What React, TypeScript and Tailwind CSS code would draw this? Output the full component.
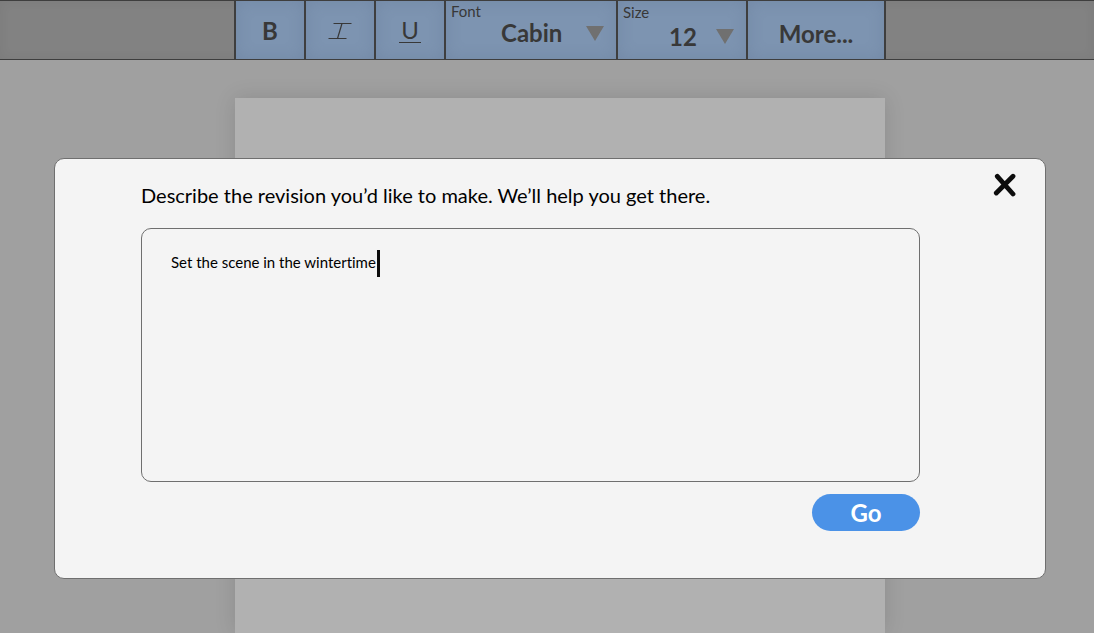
import { useState } from "react";

const cell =
  "relative h-full shrink-0 border-r-2 border-[#3e3e3e] bg-[#7d94b1] text-[#383838] shadow-[inset_0_0_16px_rgba(70,90,115,0.18)]";

function DownArrow() {
  return (
    <svg className="h-[15px] w-[18px] shrink-0" viewBox="0 0 18 15" aria-hidden="true">
      <path d="M0 0H18L9 15Z" fill="#707070" />
    </svg>
  );
}

function Toolbar() {
  return (
    <div className="flex h-[60px] justify-center border-t border-b border-[#3e3e3e] bg-[#828282] pl-[26px] shadow-[inset_0_0_12px_rgba(0,0,0,0.05)]">
      <div className="flex h-full border-l-2 border-[#3e3e3e]">
        <button type="button" aria-label="Bold" className={`${cell} w-[70px] pt-px text-2xl font-bold`}>
          B
        </button>
        <button type="button" aria-label="Italic" className={`${cell} flex w-[70px] items-center justify-center pt-[2px]`}>
          <svg className="h-[18px] w-6" viewBox="0 0 24 18" fill="none" stroke="#383838" aria-hidden="true">
            <path d="M5.500 1.500H23.500M.5 16.500H18.500" />
            <path d="M14 1.500L9.500 16.500" strokeWidth="1.200" />
          </svg>
        </button>
        <button type="button" aria-label="Underline" className={`${cell} flex w-[70px] items-center justify-center`}>
          <span className="w-[22px] border-b border-[#383838] text-2xl leading-6">U</span>
        </button>
        <div className={`${cell} w-[172px]`}>
          <label htmlFor="font" className="block pt-[2px] pl-[5px] text-[15px] leading-4">
            Font
          </label>
          <div className="flex items-center pr-3">
            <select id="font" defaultValue="Cabin" className="min-w-0 flex-1 appearance-none bg-transparent pl-[55px] text-2xl leading-7 font-bold">
              <option>Cabin</option>
            </select>
            <DownArrow />
          </div>
        </div>
        <div className={`${cell} w-[130px]`}>
          <label htmlFor="size" className="block pt-[3px] pl-[5px] text-[15px] leading-4">
            Size
          </label>
          <div className="flex items-center pt-px pr-3">
            <select id="size" defaultValue="12" className="min-w-0 flex-1 appearance-none bg-transparent pt-[2px] pl-[51px] text-2xl leading-7 font-bold">
              <option>12</option>
            </select>
            <DownArrow />
          </div>
        </div>
        <button type="button" className={`${cell} w-[138px] pt-[7px] text-2xl font-bold`}>
          More...
        </button>
      </div>
    </div>
  );
}

function RevisionDialog() {
  const [text, setText] = useState("Set the scene in the wintertime");
  return (
    <div className="fixed inset-0 pt-[158px] pr-12 pl-[54px]">
      <form
        role="dialog"
        aria-modal="true"
        aria-labelledby="prompt"
        onSubmit={(e) => e.preventDefault()}
        className="relative flex flex-col rounded-[10px] border border-[#6f6f6f] bg-[#f4f4f4] pt-[22px] pr-[125px] pb-[47px] pl-[86px] text-black"
      >
        <label id="prompt" htmlFor="revision" className="text-xl leading-7">
          Describe the revision you’d like to make. We’ll help you get there.
        </label>
        <button type="button" aria-label="Close" className="absolute top-[14px] right-7">
          <svg className="size-6" viewBox="0 0 24 24" fill="none" stroke="#0c0c0c" strokeWidth="4.800" strokeLinecap="round" aria-hidden="true">
            <path d="M4.300 3.300L20 21M20 3.300L3.300 20" />
          </svg>
        </button>
        <div className="relative mt-[19px] flex">
          <textarea
            id="revision"
            value={text}
            onChange={(e) => setText(e.target.value)}
            className="h-[254px] w-full resize-none rounded-[10px] border border-[#6f6f6f] bg-transparent px-[29px] py-[23px] text-[15px] leading-5 outline-none [font-variant-ligatures:none]"
          />
          <span className="absolute top-[22px] left-[236px] h-[27px] w-[3px] bg-[#0c0c0c]" aria-hidden="true" />
        </div>
        <button type="submit" className="mt-3 h-[37px] w-[108px] self-end rounded-full bg-[#4b92e7] text-2xl leading-8 font-bold text-white">
          Go
        </button>
      </form>
    </div>
  );
}

export default function App() {
  return (
    <div className="flex h-screen flex-col overflow-hidden bg-[#a0a0a0] font-['Lato','Open_Sans',sans-serif]">
      <Toolbar />
      <main className="flex flex-1 justify-center pt-[38px] pl-[26px]">
        <div className="w-[650px] bg-[#b1b1b1] shadow-[0_0_20px_rgba(0,0,0,0.12)]" />
      </main>
      <RevisionDialog />
    </div>
  );
}
